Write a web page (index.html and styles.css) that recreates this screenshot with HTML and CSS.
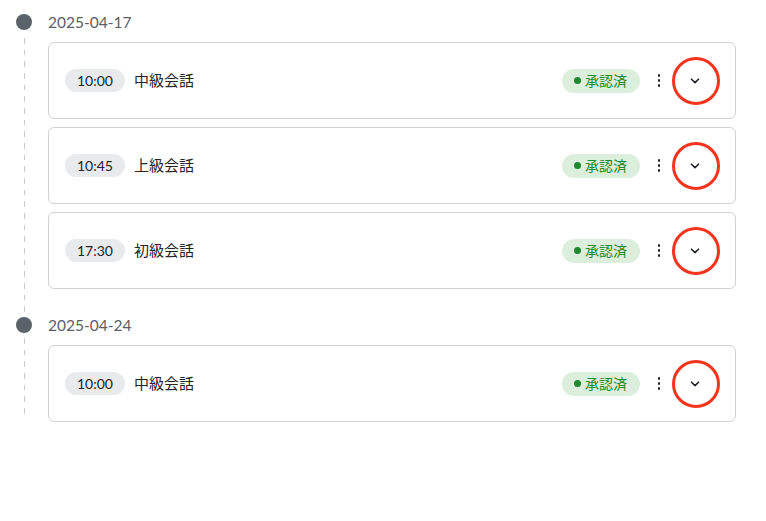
FILE: index.html
```html
<!DOCTYPE html>
<html lang="ja">
<head>
    <meta charset="UTF-8">
    <meta name="viewport" content="width=device-width, initial-scale=1.0">
    <title>レッスン予定</title>
    <link rel="stylesheet" href="styles.css">
</head>
<body>
    <div class="timeline">
        <section class="day">
            <div class="rail">
                <span class="dot"></span>
                <span class="line"></span>
            </div>
            <div class="day-body">
                <h2 class="date">2025-04-17</h2>
                <div class="cards">
                    <div class="card">
                        <span class="time">10:00</span>
                        <span class="title">中級会話</span>
                        <span class="status"><i class="status-dot"></i>承認済</span>
                        <button class="more" type="button"><i></i><i></i><i></i></button>
                        <button class="expand" type="button">
                            <svg width="10" height="6" viewBox="0 0 10 6"><path d="M1.5 1.2 L5 4.6 L8.5 1.2" fill="none" stroke="#1f2329" stroke-width="1.6" stroke-linecap="round" stroke-linejoin="round"/></svg>
                        </button>
                    </div>
                    <div class="card">
                        <span class="time">10:45</span>
                        <span class="title">上級会話</span>
                        <span class="status"><i class="status-dot"></i>承認済</span>
                        <button class="more" type="button"><i></i><i></i><i></i></button>
                        <button class="expand" type="button">
                            <svg width="10" height="6" viewBox="0 0 10 6"><path d="M1.5 1.2 L5 4.6 L8.5 1.2" fill="none" stroke="#1f2329" stroke-width="1.6" stroke-linecap="round" stroke-linejoin="round"/></svg>
                        </button>
                    </div>
                    <div class="card">
                        <span class="time">17:30</span>
                        <span class="title">初級会話</span>
                        <span class="status"><i class="status-dot"></i>承認済</span>
                        <button class="more" type="button"><i></i><i></i><i></i></button>
                        <button class="expand" type="button">
                            <svg width="10" height="6" viewBox="0 0 10 6"><path d="M1.5 1.2 L5 4.6 L8.5 1.2" fill="none" stroke="#1f2329" stroke-width="1.6" stroke-linecap="round" stroke-linejoin="round"/></svg>
                        </button>
                    </div>
                </div>
            </div>
        </section>

        <section class="day last">
            <div class="rail">
                <span class="dot"></span>
                <span class="line"></span>
            </div>
            <div class="day-body">
                <h2 class="date">2025-04-24</h2>
                <div class="cards">
                    <div class="card">
                        <span class="time">10:00</span>
                        <span class="title">中級会話</span>
                        <span class="status"><i class="status-dot"></i>承認済</span>
                        <button class="more" type="button"><i></i><i></i><i></i></button>
                        <button class="expand" type="button">
                            <svg width="10" height="6" viewBox="0 0 10 6"><path d="M1.5 1.2 L5 4.6 L8.5 1.2" fill="none" stroke="#1f2329" stroke-width="1.6" stroke-linecap="round" stroke-linejoin="round"/></svg>
                        </button>
                    </div>
                </div>
            </div>
        </section>
    </div>
</body>
</html>
```

FILE: styles.css
```css
body {
    font-family: Lato, "Noto Sans CJK JP", sans-serif;
    background-color: #fff;
    color: #22262b;
    margin: 0;
    padding: 0;
}
.timeline {
    padding: 14px 30px 0 16px;
}
.day {
    display: grid;
    grid-template-columns: 32px 1fr;
}
.rail {
    display: flex;
    flex-direction: column;
}
.dot {
    width: 16px;
    height: 16px;
    border-radius: 50%;
    background: #5a636b;
}
.line {
    flex: 1;
    width: 1px;
    margin: 8px 0 0 8px;
    background: repeating-linear-gradient(to bottom, #c9c9c9 0 5.7px, transparent 5.7px 11.67px);
}
.day.last .line {
    margin-top: 5px;
    margin-bottom: 5px;
}
.date {
    margin: 0;
    height: 16px;
    line-height: 16px;
    font-size: 15.5px;
    font-weight: normal;
    color: #5a6066;
}
.cards {
    display: flex;
    flex-direction: column;
    gap: 8px;
    padding: 12px 0 28px;
}
.day.last .cards {
    padding-bottom: 0;
}
.card {
    display: flex;
    align-items: center;
    height: 77px;
    box-sizing: border-box;
    padding: 0 15px 0 16px;
    border: 1px solid #d2d2d2;
    border-radius: 6px;
}
.time {
    display: inline-block;
    height: 23px;
    line-height: 23px;
    padding: 0 12px;
    border-radius: 12px;
    background: #e9eaec;
    font-size: 14px;
    color: #22262b;
}
.title {
    margin-left: 9px;
    padding-bottom: 2px;
    font-size: 15px;
    flex: 1;
}
.status {
    display: inline-flex;
    align-items: center;
    height: 24px;
    padding: 0 12px 1px 12px;
    box-sizing: border-box;
    width: 78px;
    border-radius: 12px;
    background: #dcefdd;
    color: #1e8a2f;
    font-size: 14px;
}
.status-dot {
    width: 7px;
    height: 7px;
    border-radius: 50%;
    background: #1e8a2f;
    margin-right: 4px;
}
.more {
    width: 24px;
    height: 24px;
    margin-left: 7px;
    padding: 0;
    border: none;
    background: none;
    display: flex;
    flex-direction: column;
    align-items: center;
    justify-content: center;
    gap: 2.5px;
}
.more i {
    width: 2.5px;
    height: 2.5px;
    border-radius: 50%;
    background: #22262b;
}
.expand {
    width: 48px;
    height: 48px;
    margin-left: 1px;
    padding: 0 2px 0 0;
    border: 3px solid #f4341d;
    border-radius: 50%;
    background: none;
    display: flex;
    align-items: center;
    justify-content: center;
}
```
